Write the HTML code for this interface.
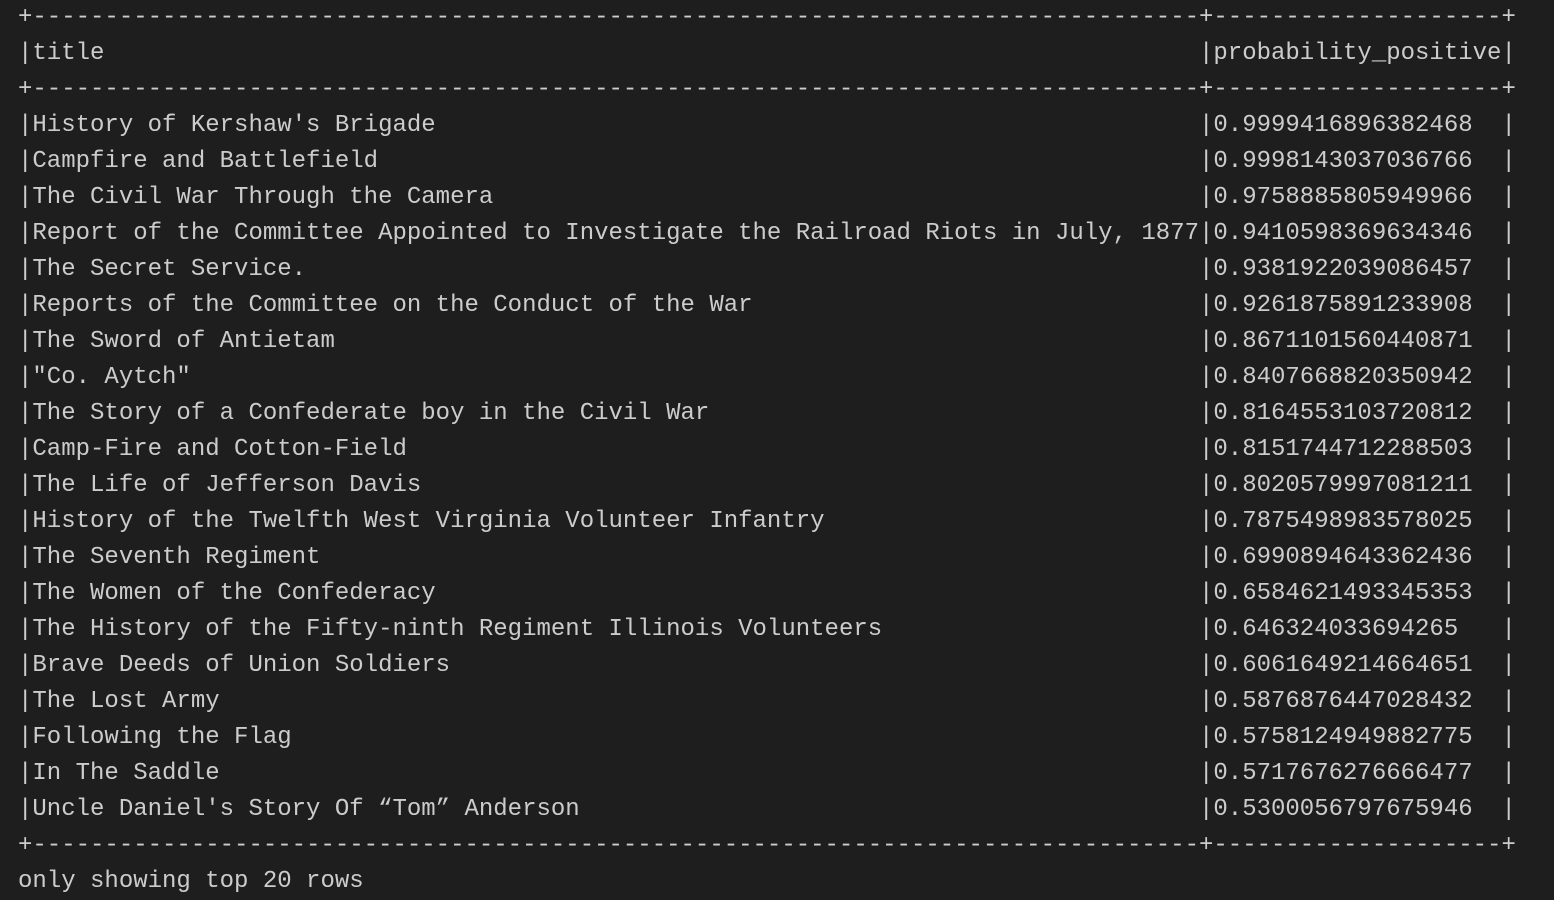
<!DOCTYPE html>
<html><head><meta charset="utf-8"><style>
html,body{margin:0;padding:0;background:#1e1e1e;width:1554px;height:872px;overflow:hidden}
.t{position:absolute;left:18px;top:0px;font-family:"Liberation Mono",monospace;font-size:24px;line-height:36px;color:#cccccc;white-space:pre}
.c1{display:inline-block;width:81ch;overflow:hidden;vertical-align:top}
.c2{display:inline-block;width:20ch;vertical-align:top}
</style></head><body><div class="t" id="t"></div>
<script>
var rows=[["History of Kershaw's Brigade","0.9999416896382468"],
["Campfire and Battlefield","0.9998143037036766"],
["The Civil War Through the Camera","0.9758885805949966"],
["Report of the Committee Appointed to Investigate the Railroad Riots in July, 1877","0.9410598369634346"],
["The Secret Service.","0.9381922039086457"],
["Reports of the Committee on the Conduct of the War","0.9261875891233908"],
["The Sword of Antietam","0.8671101560440871"],
["\"Co. Aytch\"","0.8407668820350942"],
["The Story of a Confederate boy in the Civil War","0.8164553103720812"],
["Camp-Fire and Cotton-Field","0.8151744712288503"],
["The Life of Jefferson Davis","0.8020579997081211"],
["History of the Twelfth West Virginia Volunteer Infantry","0.7875498983578025"],
["The Seventh Regiment","0.6990894643362436"],
["The Women of the Confederacy","0.6584621493345353"],
["The History of the Fifty-ninth Regiment Illinois Volunteers","0.646324033694265"],
["Brave Deeds of Union Soldiers","0.6061649214664651"],
["The Lost Army","0.5876876447028432"],
["Following the Flag","0.5758124949882775"],
["In The Saddle","0.5717676276666477"],
["Uncle Daniel's Story Of \u201cTom\u201d Anderson","0.5300056797675946"]];
function esc(s){return s.replace(/&/g,"&amp;").replace(/</g,"&lt;")}
var sep="+"+"-".repeat(81)+"+"+"-".repeat(20)+"+";
function row(a,b){return "|<span class=c1>"+esc(a)+"</span>|<span class=c2>"+esc(b)+"</span>|"}
var h=[sep,row("title","probability_positive"),sep];
rows.forEach(function(r){h.push(row(r[0],r[1]))});
h.push(sep);h.push("only showing top 20 rows");
document.getElementById("t").innerHTML=h.join("\n");
</script></body></html>
